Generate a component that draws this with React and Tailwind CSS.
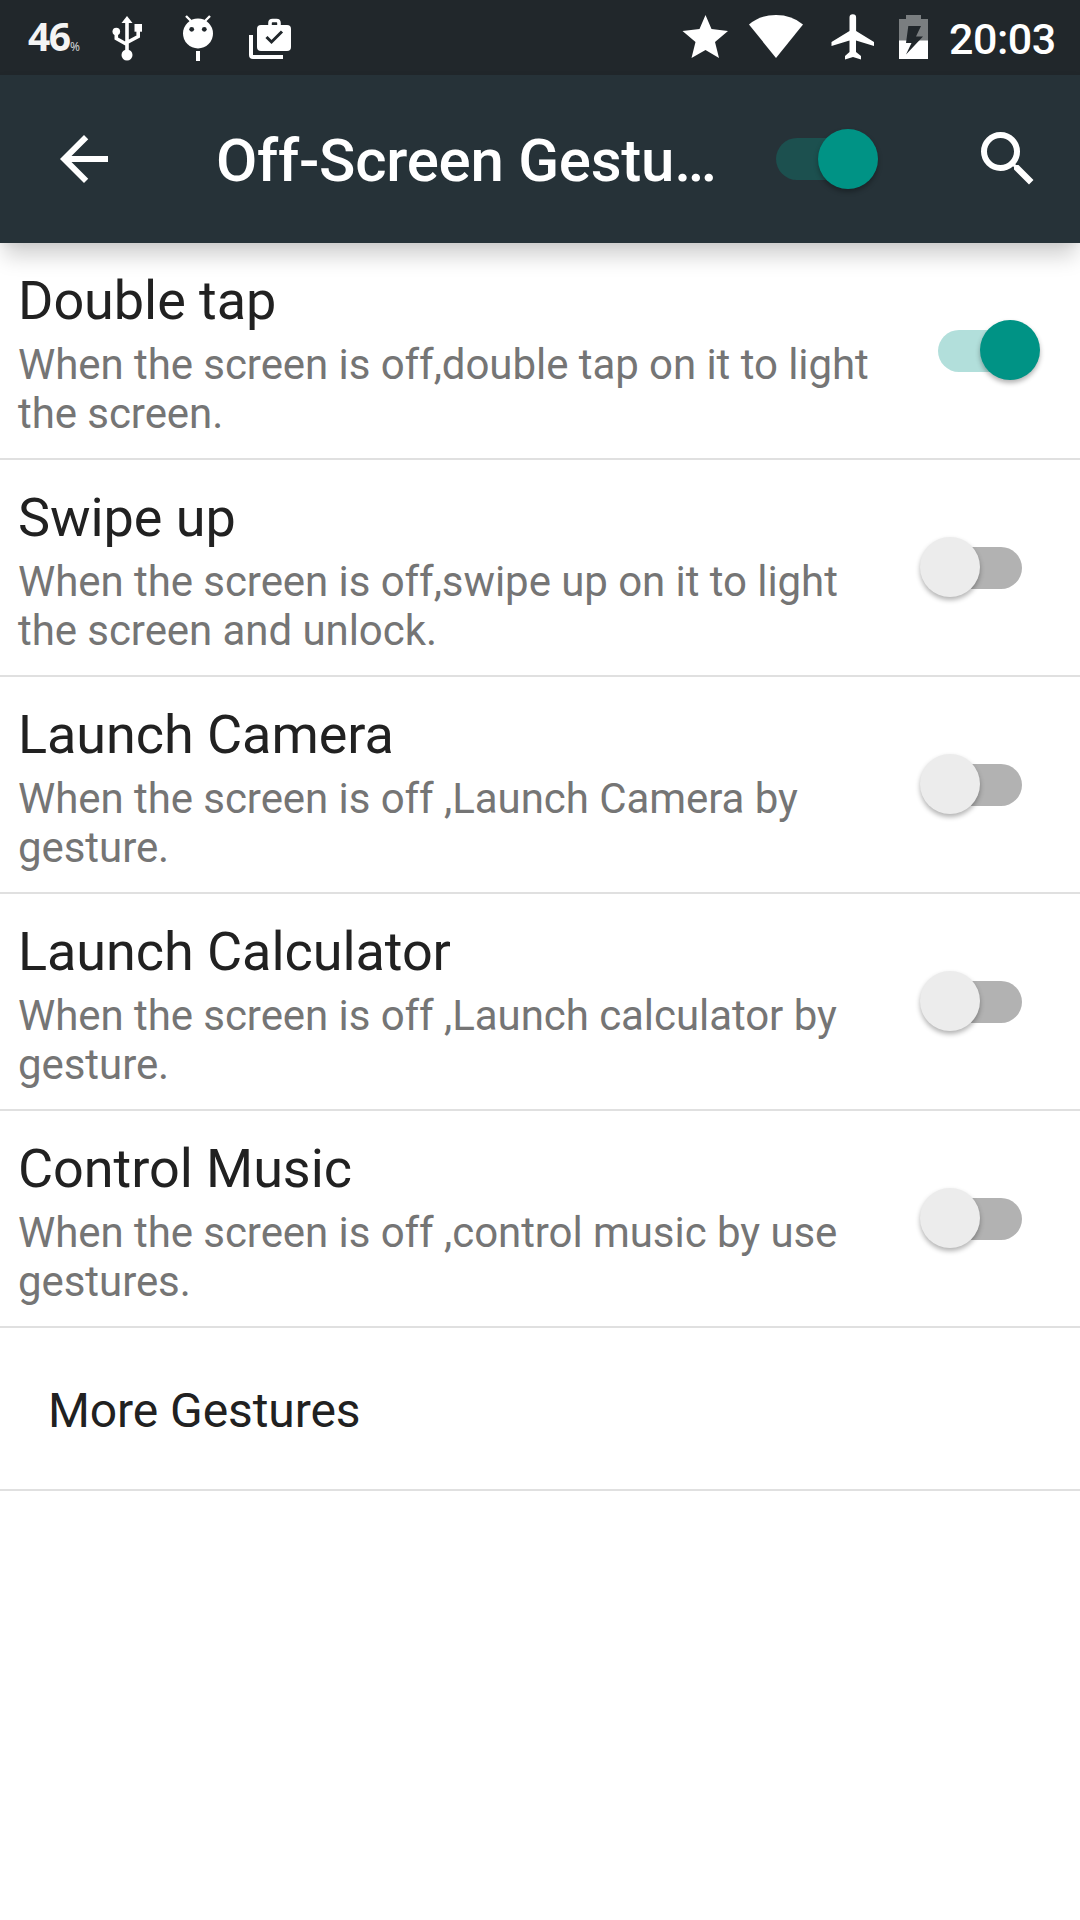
import React from "react";

const settings = [
  {
    title: "Double tap",
    about: "When the screen is off,double tap on it to light the screen.",
    on: true,
  },
  {
    title: "Swipe up",
    about: "When the screen is off,swipe up on it to light the screen and unlock.",
    on: false,
  },
  {
    title: "Launch Camera",
    about: "When the screen is off ,Launch Camera by gesture.",
    on: false,
  },
  {
    title: "Launch Calculator",
    about: "When the screen is off ,Launch calculator by gesture.",
    on: false,
  },
  {
    title: "Control Music",
    about: "When the screen is off ,control music by use gestures.",
    on: false,
  },
];

const Toggle = ({ on, dark }) => (
  <div className="relative flex h-[60px] w-[120px] shrink-0 items-center justify-center">
    <div
      className={`h-[42px] w-[84px] rounded-full ${
        on ? (dark ? "bg-[#1c504f]" : "bg-[#b2dfdb]") : "bg-[#b2b2b2]"
      }`}
    />
    <div
      className={`absolute top-[-0.5px] size-[60px] rounded-full shadow-[0_3px_5px_rgba(0,0,0,0.3)] ${
        on ? "right-0 bg-[#009385]" : "left-0 bg-[#ececec]"
      }`}
    />
  </div>
);

const UsbIcon = () => (
  <svg width="32" height="46" viewBox="0 0 32 46" fill="none">
    <path d="M15 6v30M4.300 16v6.500L15 28.500M26.200 14v6.500L15 26.500" stroke="#fff" strokeWidth="3.600" />
    <path d="M15 0l5.500 7h-11z" fill="#fff" />
    <circle cx="4.300" cy="15.500" r="3.800" fill="#fff" />
    <path d="M22.500 8H30v7.700h-7.500z" fill="#fff" />
    <circle cx="15" cy="39" r="5.500" fill="#fff" />
  </svg>
);

const DebugIcon = () => (
  <svg width="32" height="46" viewBox="0 0 32 46" fill="none">
    <path d="M4 1l5 5M28 1l-5 5" stroke="#fff" strokeWidth="2.400" />
    <circle cx="16" cy="18.500" r="15" fill="#fff" />
    <circle cx="9.700" cy="14.300" r="2.400" fill="#21272b" />
    <circle cx="22.300" cy="14.300" r="2.400" fill="#21272b" />
    <path d="M14 36h4v10h-4z" fill="#fff" />
  </svg>
);

const WorkIcon = () => (
  <svg width="43" height="42" viewBox="0 0 43 42" fill="none">
    <path d="M2 17v20q0 2 2 2h30" stroke="#fff" strokeWidth="4" />
    <path d="M21 8V5q0-2.500 2.500-2.500h4Q30 2.500 30 5v3" stroke="#fff" strokeWidth="3.600" />
    <rect x="8" y="7" width="34" height="26" rx="4" fill="#fff" />
    <path d="M17.500 19l5 5 10.500-10.500" stroke="#21272b" strokeWidth="3" />
  </svg>
);

const StatusBar = () => (
  <div className="flex h-[75px] items-start bg-[#21272b] text-white">
    <div className="ml-[28px] mt-[16px] flex h-[40px] w-[52px] items-baseline font-['Noto_Sans']">
      <span className="w-[42px] text-[39px] font-bold leading-[40px] tracking-[-1.5px] text-[#f4f4f4]">
        46
      </span>
      <span className="text-[12px] leading-[12px] tracking-[-1px] text-[#d0d2d3]">%</span>
    </div>
    <div className="ml-[32px] mt-[16px]">
      <UsbIcon />
    </div>
    <div className="ml-[38px] mt-[15px]">
      <DebugIcon />
    </div>
    <div className="ml-[35px] mt-[18px]">
      <WorkIcon />
    </div>
    <svg className="ml-[390px] mt-[15px]" width="46" height="43" viewBox="0 0 46 43" fill="#fff">
      <path d="M23.500 0l6 14 16.500 2-13 11 4 16-13.500-8-14 8 4-16L.5 16l17-2z" />
    </svg>
    <svg className="ml-[21px] mt-[15px]" width="54" height="43" viewBox="0 0 54 43" fill="#fff">
      <path d="M0 9.500Q11 0 27 0t27 9.500L27 43z" />
    </svg>
    <svg className="ml-[28px] mt-[14px]" width="44" height="46" viewBox="0 0 44 46" fill="#fff">
      <path d="M18.500 3.500a3.300 3.300 0 0 1 6.600 0V17L43 28v4l-18-5.500V38l5 4v3.500L22 43l-8 2.500V42l4.500-4V26.500L.5 32v-4l18-11z" />
    </svg>
    <svg className="ml-[24px] mt-[15px]" width="30" height="44" viewBox="0 0 30 44">
      <path d="M0 4h7V0h15v4h7v22H0z" fill="#7a7e80" />
      <path d="M0 25.500h29V44H0z" fill="#fff" />
      <path d="M9.300 11H22l-5 10.500h7L7 39.500 12.500 28H7z" fill="#21272b" />
    </svg>
    <span className="ml-[20px] mt-[14px] text-[43px] font-medium leading-[50px] tracking-[-0.5px]">
      20:03
    </span>
  </div>
);

const Header = () => (
  <div className="relative z-10 flex h-[168px] items-center bg-[#263238] text-white shadow-[0_17px_20px_-4px_rgba(0,0,0,0.18),0_2px_8px_rgba(0,0,0,0.05)]">
    <svg className="ml-[48px] shrink-0" width="72" height="72" viewBox="0 0 24 24" fill="#fff">
      <path d="M20 11H7.830l5.590-5.590L12 4l-8 8 8 8 1.410-1.410L7.830 13H20v-2z" />
    </svg>
    <h1 className="ml-[96px] w-[510px] whitespace-nowrap pt-[4px] text-[60px] font-medium leading-[72px] tracking-[-0.25px]">
      Off-Screen Gestu…
    </h1>
    <div className="ml-[32px]">
      <Toggle on dark />
    </div>
    <svg className="ml-[94px] shrink-0" width="72" height="72" viewBox="0 0 24 24" fill="#fff">
      <path d="M15.500 14h-.79l-.28-.27A6.471 6.471 0 0 0 16 9.500 6.500 6.500 0 1 0 9.500 16c1.610 0 3.090-.59 4.230-1.570l.27.28v.79l5 4.990L20.490 19l-4.990-5zm-6 0C7.010 14 5 11.990 5 9.500S7.010 5 9.500 5 14 7.010 14 9.500 11.990 14 9.500 14z" />
    </svg>
  </div>
);

const App = () => {
  return (
    <div className="flex h-[1920px] w-[1080px] flex-col overflow-hidden bg-white font-[Roboto,sans-serif]">
      <StatusBar />
      <Header />
      {settings.map((item) => (
        <div
          key={item.title}
          className="flex h-[217px] items-center justify-between border-b-2 border-[#e0e0e0] pl-[18px] pr-[40px]"
        >
          <div className="w-[870px] pt-[6px]">
            <h2 className="text-[54px] leading-[63px] tracking-[-0.06px] text-[#212121]">
              {item.title}
            </h2>
            <p className="mt-2 text-[42px] leading-[49px] tracking-[-0.06px] text-[#757575]">
              {item.about}
            </p>
          </div>
          <Toggle on={item.on} />
        </div>
      ))}
      <div className="flex h-[163px] items-center border-b-2 border-[#e0e0e0] pl-[48px] pt-1 text-[48px] leading-[56px] tracking-[-0.08px] text-[#212121]">
        More Gestures
      </div>
    </div>
  );
};

export default App;
